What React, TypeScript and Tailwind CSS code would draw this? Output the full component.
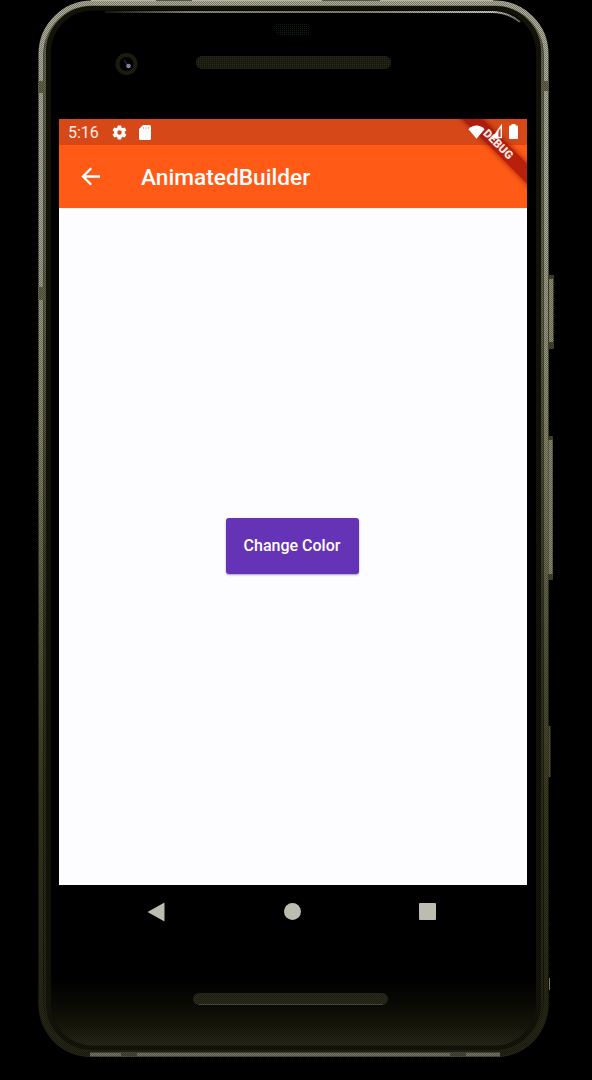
import React from "react";

function StatusBar() {
  return (
    <div className="flex h-[26px] items-center justify-between bg-[#d74818] pl-[9px] pr-[9px] text-white">
      <div className="flex items-center gap-[11px]">
        <div className="flex items-center gap-[12px]">
          <span className="whitespace-nowrap text-[16px] leading-[25px] text-[#ffece4]">5:16</span>
          <svg className="h-[17px] w-[17px]" viewBox="0 0 24 24" fill="#fff">
            <path d="M19.4 13a7.8 7.8 0 0 0 0-2l2.1-1.7c.2-.1.3-.4.1-.6l-2-3.5c-.1-.2-.4-.3-.6-.2l-2.5 1c-.5-.4-1.1-.7-1.7-1L14.400 2.400c0-.2-.2-.4-.5-.4h-4c-.2 0-.4.200-.5.400L9 5c-.6.300-1.200.600-1.700 1L4.900 5c-.2-.1-.5 0-.6.200l-2 3.500c-.1.200-.1.500.1.600L4.500 11a7.800 7.800 0 0 0 0 2l-2.100 1.700c-.2.100-.2.400-.1.600l2 3.500c.1.200.400.300.600.200l2.400-1c.5.400 1.100.700 1.700 1l.4 2.600c.1.200.3.400.5.400h4c.300 0 .5-.2.5-.4l.4-2.600c.6-.3 1.200-.6 1.700-1l2.500 1c.200.100.500 0 .600-.2l2-3.500c.2-.2.100-.5-.1-.6ZM12 15.200a3.200 3.200 0 1 1 0-6.400 3.200 3.200 0 0 1 0 6.400Z" />
          </svg>
        </div>
        <svg className="h-[15px] w-[12px]" viewBox="0 0 12 15">
          <path d="M4 0h6.500Q12 0 12 1.500v12Q12 15 10.500 15h-9Q0 15 0 13.500V4Z" fill="#fff" />
          <path d="M4.600 2v2M7 2v2M9.400 2v2" stroke="#f3b8a4" strokeWidth="1" />
        </svg>
      </div>
      <div className="relative z-10 flex items-center gap-[7px] pb-px">
        <svg className="h-[14px] w-[17px]" viewBox="0 0 17 14">
          <path d="M.4 4.200C4.800-.6 12.200-.6 16.600 4.200L8.500 13.700Z" fill="#fff" />
        </svg>
        <svg className="h-[15px] w-[10px]" viewBox="0 0 10 15">
          <path d="M9.300 1.800V13.500H1Z" fill="none" stroke="#fff" strokeWidth="1.400" />
          <path d="M6.500 5.500V14.500H0Z" fill="#fff" />
        </svg>
        <svg className="h-[15px] w-[9px]" viewBox="0 0 9 15">
          <path d="M2.500 0h4v1.500H8Q9 1.500 9 2.500V14q0 1-1 1H1q-1 0-1-1V2.500Q0 1.500 1 1.500h1.500Z" fill="#fff" />
        </svg>
      </div>
    </div>
  );
}

function AppBar() {
  return (
    <header className="flex h-[63px] items-center gap-[40px] bg-[#ff5a16] pl-[22px] text-white">
      <svg className="h-[20px] w-[20px]" viewBox="0 0 20 20" fill="none" stroke="#fff" strokeWidth="2.300">
        <path d="M19 9.500H2.500M10.200 1.300 2 9.500l8.200 8.200" />
      </svg>
      <h1 className="whitespace-nowrap pt-[2px] text-[22.700px] font-medium leading-[28px]">AnimatedBuilder</h1>
    </header>
  );
}

function DebugBanner() {
  return (
    <div className="pointer-events-none absolute right-0 top-0 flex h-[70px] w-[70px] items-center justify-center overflow-hidden">
      <div className="flex h-[15px] w-[120px] shrink-0 translate-x-[6px] translate-y-[-10px] rotate-45 items-center justify-center bg-[#a00d08]/75 shadow-[0_0_5px_rgba(80,0,0,0.6)]">
        <span className="text-[11.500px] font-black leading-none text-[#ffe9e4]">DEBUG</span>
      </div>
    </div>
  );
}

function NavBar() {
  return (
    <nav className="flex h-[53px] w-[468px] items-center justify-between pl-[88px] pr-[91px]">
      <svg className="h-[20px] w-[18px]" viewBox="0 0 18 20"><path d="M17.500.5v19L.5 10Z" fill="#bcbcb0" /></svg>
      <span className="h-[17px] w-[17px] rounded-full bg-[#bcbcb0]" />
      <span className="h-[17px] w-[17px] rounded-[1px] bg-[#bcbcb0]" />
    </nav>
  );
}

function Hardware() {
  return (
    <svg className="pointer-events-none absolute inset-0 h-full w-full" viewBox="0 0 592 1080" fill="none">
      <defs>
        <linearGradient id="metal" x2="0" y2="1057" gradientUnits="userSpaceOnUse">
          <stop stopColor="#aeae9b" />
          <stop offset=".2" stopColor="#aaaa96" />
          <stop offset=".4" stopColor="#8b8b70" />
          <stop offset=".55" stopColor="#66664c" />
          <stop offset=".75" stopColor="#3c3c22" />
          <stop offset="1" stopColor="#242414" />
        </linearGradient>
        <linearGradient id="rim" x2="0" y2="1057" gradientUnits="userSpaceOnUse">
          <stop stopColor="#66664f" />
          <stop offset=".3" stopColor="#606046" />
          <stop offset=".6" stopColor="#333320" />
          <stop offset="1" stopColor="#252515" />
        </linearGradient>
        <linearGradient id="glint" x1="105" x2="525" gradientUnits="userSpaceOnUse">
          <stop stopColor="#18180e" />
          <stop offset=".2" stopColor="#8e8e80" />
          <stop offset=".6" stopColor="#8d8d72" />
          <stop offset=".93" stopColor="#d0d0c4" />
          <stop offset="1" stopColor="#55554a" />
        </linearGradient>
        <pattern id="grille" width="2" height="2" patternUnits="userSpaceOnUse">
          <path d="M0 0h1v1H0Z" fill="#3c3c24" />
        </pattern>
        <pattern id="sensor" width="2" height="2" patternUnits="userSpaceOnUse">
          <path d="M0 0h1v1H0Z" fill="#12301c" />
        </pattern>
        <pattern id="weave" width="2" height="2" patternUnits="userSpaceOnUse">
          <path d="M0 0h1v1H0ZM1 1h1v1H1Z" fill="#000" fillOpacity=".3" />
        </pattern>
      </defs>
      <rect x="48.500" y="8" width="490" height="1040" rx="44" stroke="#15150b" strokeWidth="5" />
      <rect x="45" y="5" width="497" height="1046" rx="47" stroke="url(#rim)" strokeWidth="2" />
      <rect x="41" y="3" width="505" height="1051" rx="51" stroke="url(#metal)" strokeWidth="5" />
      <path d="M91 1h65M192 1h130M380 1h113" stroke="#b5b5a0" strokeWidth="2" />
      <path d="M90 1054.500H500" stroke="#77776a" strokeWidth="4" />
      <path d="M121 1054.500h16M450 1054.500h16" stroke="#4a4a3b" strokeWidth="4" />
      <path d="M41 81v12M41 287v13M546 81v10" stroke="#65654d" strokeWidth="6" />
      <rect x="548" y="275" width="6" height="74" rx="1" fill="#47472b" />
      <path d="M551 279v63" stroke="#8f8f75" strokeWidth="4" />
      <rect x="548" y="436" width="5" height="144" rx="1" fill="#47472b" />
      <path d="M550.500 440v134" stroke="#8a8a72" strokeWidth="4" />
      <path d="M549.500 726v51" stroke="#56563a" strokeWidth="2" />
      <path d="M549.500 978v12" stroke="#77774f" strokeWidth="1" />
      <path d="M105 12H492Q508 12 520 22" stroke="url(#glint)" strokeWidth="2" />
      <rect x="276" y="23" width="34" height="12" rx="3" fill="url(#sensor)" />
      <circle cx="126.500" cy="64" r="9" stroke="#202013" strokeWidth="4" />
      <path d="m124 60 3 4" stroke="#1d2a5c" strokeWidth="1.500" />
      <circle cx="128.500" cy="66" r="2.300" fill="#9499bd" />
      <rect x="196" y="56" width="195" height="13" rx="6" fill="#1c1c11" />
      <rect x="196" y="56" width="195" height="13" rx="6" fill="url(#grille)" />
      <rect x="193" y="993" width="195" height="12" rx="6" fill="#2b2b1b" />
      <path d="M199 1004.500H383" stroke="#55553a" />
      <path d="M38 54A52 52 0 0 1 90 1H497A52 52 0 0 1 549 54V119H38ZM38 119H59V885H38ZM527 119H554V885H527ZM38 885H147V940H38ZM438 885H549V940H438ZM38 940H549V1005A52 52 0 0 1 497 1057H90A52 52 0 0 1 38 1005Z" fill="url(#weave)" />
    </svg>
  );
}

export default function App() {
  return (
    <main className="relative h-[1080px] w-[592px] overflow-hidden bg-black pl-[38px] pt-px font-['Roboto',sans-serif]">
      <div className="flex h-[1056px] w-[511px] flex-col rounded-[53px] bg-[linear-gradient(180deg,#000_0px,#000_978px,#0a0a05_1000px,#18180c_1025px,#2e2e1e_1048px)] pl-[21px] pt-[118px]">
        <section className="relative flex h-[766px] w-[468px] flex-col overflow-hidden bg-[#fdfcff]">
          <DebugBanner />
          <StatusBar />
          <AppBar />
          <div className="flex flex-1 items-center justify-center border-t border-[#fff3da] pb-[3px] pr-[2px]">
            <button className="h-[56px] w-[133px] rounded-[3px] bg-[#6433b6] pt-px text-[16px] font-medium text-white shadow-[0_1px_2px_rgba(70,40,90,0.45)]">
              Change Color
            </button>
          </div>
        </section>
        <NavBar />
      </div>
      <Hardware />
    </main>
  );
}
